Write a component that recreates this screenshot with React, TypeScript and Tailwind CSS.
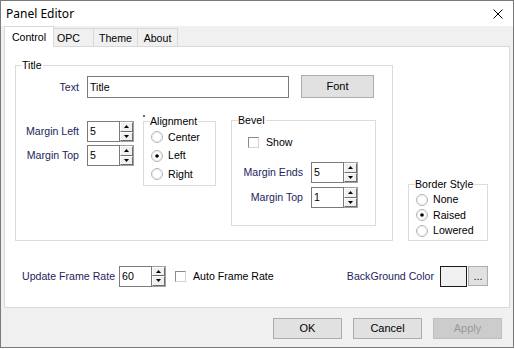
import React from "react";

const LABEL = "text-[10.6px] leading-[13px] text-[#1e1e5c] whitespace-nowrap";
const TEXT = "text-[10.6px] leading-[13px] text-black whitespace-nowrap";

function GroupBox({
  title,
  className,
  children,
}: {
  title: string;
  className: string;
  children?: React.ReactNode;
}) {
  return (
    <div className={`relative shrink-0 border border-[#dcdcdc] ${className}`}>
      <span className={`absolute left-[6px] top-[-7px] bg-white pr-[1px] ${TEXT}`}>{title}</span>
      {children}
    </div>
  );
}

function SpinBtn({ up }: { up?: boolean }) {
  return (
    <div className="flex flex-1 items-center justify-center border-l border-t border-r border-b border-l-white border-t-white border-r-[#6d6d6d] border-b-[#6d6d6d] bg-[#f0f0f0]">
      <svg width="5" height="3" viewBox="0 0 5 3">
        {up ? <polygon points="0,3 2.5,0 5,3" fill="#000" /> : <polygon points="0,0 5,0 2.5,3" fill="#000" />}
      </svg>
    </div>
  );
}

function Spin({ value }: { value: string }) {
  return (
    <div className="flex h-[21px] shrink-0">
      <div className={`flex h-full w-[33px] items-center border border-[#7a7a7a] bg-white pl-[2px] ${TEXT}`}>{value}</div>
      <div className="flex h-full w-[14px] flex-col border-y border-r border-[#a0a0a0]">
        <SpinBtn up />
        <SpinBtn />
      </div>
    </div>
  );
}

function Radio({ label, checked }: { label: string; checked?: boolean }) {
  return (
    <div className="flex items-center gap-[5px]">
      <svg width="12" height="12" viewBox="0 0 12 12" className="shrink-0">
        <circle cx="6" cy="6" r="5.5" fill="#fff" stroke="#b4b4b4" />
        <circle cx="6" cy="6" r="4.5" fill="#fff" stroke="#e6e6e6" />
        {checked && <circle cx="6" cy="6" r="1.8" fill="#000" />}
      </svg>
      <span className={TEXT}>{label}</span>
    </div>
  );
}

function Check() {
  return (
    <div className="h-[11px] w-[11px] shrink-0 border border-l-[#8a8a8a] border-t-[#8a8a8a] border-r-[#d4d4d4] border-b-[#d4d4d4] bg-white" />
  );
}

function Btn({ label, disabled, className }: { label: string; disabled?: boolean; className: string }) {
  return (
    <div
      className={`flex items-center justify-center border text-[11px] leading-[13px] ${
        disabled ? "border-[#bfbfbf] bg-[#cccccc] text-[#9a9a9a]" : "border-[#adadad] bg-[#e1e1e1] text-black"
      } ${className}`}
    >
      {label}
    </div>
  );
}

export default function App() {
  return (
    <div className="h-[349px] w-[515px] bg-white font-['Liberation_Sans',Arial,sans-serif]">
      <div className="flex h-[348px] w-[514px] flex-col border border-[#7a7a7a] bg-[#f0f0f0]">
        {/* title bar */}
        <div className="flex h-[25px] shrink-0 items-center justify-between bg-white pl-[5px] pr-[10px]">
          <span className="font-['Noto_Sans',sans-serif] text-[12px] leading-[16px] text-black">Panel Editor</span>
          <svg width="10" height="10" viewBox="0 0 10 10">
            <path d="M0.5 0.5L9.5 9.5M9.5 0.5L0.5 9.5" stroke="#000" strokeWidth="1" />
          </svg>
        </div>

        <div className="flex flex-1 flex-col px-[3px]">
          {/* tabs */}
          <div className="flex h-[20px] shrink-0 items-end">
            <div className={`relative z-10 -mb-px flex h-[21px] w-[50px] items-center justify-center border border-b-0 border-[#d9d9d9] bg-white ${TEXT}`}>
              Control
            </div>
            <div className={`flex h-[18px] w-[40px] items-center border-r border-t border-[#d9d9d9] pl-[3px] pt-[1px] ${TEXT}`}>OPC</div>
            <div className={`flex h-[18px] w-[44px] items-center justify-center border-r border-t border-[#d9d9d9] pt-[1px] ${TEXT}`}>Theme</div>
            <div className={`flex h-[18px] w-[40px] items-center justify-center border-r border-t border-[#d9d9d9] pt-[1px] ${TEXT}`}>About</div>
          </div>

          {/* panel */}
          <div className="flex h-[262px] shrink-0 flex-col border border-[#d9d9d9] bg-white">
            <div className="flex items-end pl-[10px] pt-[18px]">
              <GroupBox title="Title" className="h-[176px] w-[378px]">
                <div className="flex flex-col pt-[9px]">
                  <div className="flex h-[23px] items-start">
                    <span className={`w-[63px] pt-[6px] text-right ${LABEL}`}>Text</span>
                    <div className={`ml-[8px] mt-[1px] flex h-[22px] w-[202px] items-center border border-[#7a7a7a] bg-white pl-[2px] ${TEXT}`}>
                      Title
                    </div>
                    <Btn label="Font" className="ml-[12px] h-[23px] w-[73px]" />
                  </div>

                  <div className="mt-[22px] flex items-start">
                    <div className="mt-[1px] flex flex-col gap-[3px]">
                      <div className="flex items-center">
                        <span className={`w-[63px] text-right ${LABEL}`}>Margin Left</span>
                        <div className="ml-[8px]">
                          <Spin value="5" />
                        </div>
                      </div>
                      <div className="flex items-center">
                        <span className={`w-[63px] text-right ${LABEL}`}>Margin Top</span>
                        <div className="ml-[8px]">
                          <Spin value="5" />
                        </div>
                      </div>
                    </div>

                    <GroupBox title="Alignment" className="ml-[9px] mt-[1px] h-[65px] w-[73px]">
                      <div className="absolute left-[-1px] top-[-7px] h-[2px] w-[2px] bg-[#6a6a6a]" />
                      <div className="flex flex-col pl-[7px] pt-[6px]">
                        <div className="flex h-[18.5px] items-center">
                          <Radio label="Center" />
                        </div>
                        <div className="flex h-[18.5px] items-center">
                          <Radio label="Left" checked />
                        </div>
                        <div className="flex h-[18.5px] items-center">
                          <Radio label="Right" />
                        </div>
                      </div>
                    </GroupBox>

                    <GroupBox title="Bevel" className="ml-[15px] h-[106px] w-[145px]">
                      <div className="flex flex-col pt-[15px]">
                        <div className="flex h-[13px] items-center pl-[16px]">
                          <Check />
                          <span className={`ml-[7px] ${TEXT}`}>Show</span>
                        </div>
                        <div className="mt-[13px] flex flex-col gap-[4px]">
                          <div className="flex items-center">
                            <span className={`w-[71px] text-right ${LABEL}`}>Margin Ends</span>
                            <div className="ml-[8px]">
                              <Spin value="5" />
                            </div>
                          </div>
                          <div className="flex items-center">
                            <span className={`w-[71px] text-right ${LABEL}`}>Margin Top</span>
                            <div className="ml-[8px]">
                              <Spin value="1" />
                            </div>
                          </div>
                        </div>
                      </div>
                    </GroupBox>
                  </div>
                </div>
              </GroupBox>

              <GroupBox title="Border Style" className="ml-[15px] h-[57px] w-[80px]">
                <div className="flex flex-col pl-[7px] pt-[7px]">
                  <div className="flex h-[15.5px] items-center">
                    <Radio label="None" />
                  </div>
                  <div className="flex h-[15.5px] items-center">
                    <Radio label="Raised" checked />
                  </div>
                  <div className="flex h-[15.5px] items-center">
                    <Radio label="Lowered" />
                  </div>
                </div>
              </GroupBox>
            </div>

            {/* bottom row */}
            <div className="mt-[24px] flex h-[22px] items-center pl-[17px] pr-[21px]">
              <span className={`w-[97px] ${LABEL}`}>Update Frame Rate</span>
              <Spin value="60" />
              <div className="ml-[9px]">
                <Check />
              </div>
              <span className={`ml-[7px] ${TEXT}`}>Auto Frame Rate</span>
              <span className={`ml-auto ${LABEL}`}>BackGround Color</span>
              <div className="ml-[6px] h-[21px] w-[27px] border border-[#1a1a1a] bg-[#f0f0f0]" />
              <div className="ml-[1px] flex h-[20px] w-[20px] items-end justify-center border border-[#adadad] bg-[#e1e1e1] pb-[3px] text-[11px] leading-[11px] text-[#101050]">
                ...
              </div>
            </div>
          </div>

          {/* buttons */}
          <div className="mt-[10px] flex justify-end gap-[11px] pr-[8px]">
            <Btn label="OK" className="h-[21px] w-[69px]" />
            <Btn label="Cancel" className="h-[21px] w-[69px]" />
            <Btn label="Apply" disabled className="h-[21px] w-[69px]" />
          </div>
        </div>
      </div>
    </div>
  );
}
